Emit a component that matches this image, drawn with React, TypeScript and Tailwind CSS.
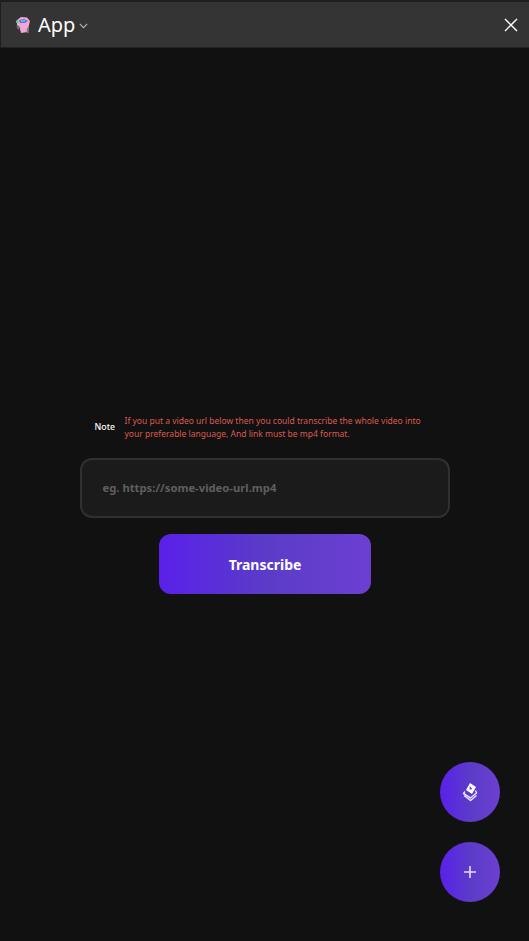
import React from "react";

const grad = "bg-[linear-gradient(90deg,#5a20ea_0%,#5a3cc8_50%,#6c3fd2_100%)]";

export default function App() {
  return (
    <div className="relative flex h-[941px] w-[529px] flex-col overflow-hidden bg-[#111111] font-['Noto_Sans',sans-serif]">
      <header className="flex h-[48px] shrink-0 items-center justify-between border-t-2 border-l border-b border-t-[#1e1e1e] border-l-[#1e1e1e] border-b-[#222222] bg-[#343434] pl-[14px] pr-[11px]">
        <div className="flex items-center">
          <svg width="16" height="18" viewBox="0 0 16 18" className="mr-[7px]">
            <path d="M2 4 L6 1 L12 1.5 L15 5 L14 9 L12.5 16 L6 17 L4.5 11 L2 9 Z" fill="#f3a6d2" />
            <path d="M4 4 L9 3 L13 5 L10 7 L5 7 Z" fill="#6a6ae0" />
            <rect x="6" y="4" width="4" height="2" fill="#38c8d8" />
            <rect x="1" y="4.5" width="2.5" height="2.5" fill="#2fe08a" />
            <path d="M1.5 9 L4 11 L4 14 L2 12 Z" fill="#777777" />
            <path d="M12 12 L14 12 L13.5 17 L11.5 17 Z" fill="#8a7a80" />
          </svg>
          <span className="text-[20px] leading-none text-white">App</span>
          <svg width="9" height="6" viewBox="0 0 9 6" className="ml-[4px] mt-[2px]" fill="none" stroke="#b4b4b4" strokeWidth="1.1">
            <path d="M0.8 0.8 L4.5 4.6 L8.2 0.8" />
          </svg>
        </div>
        <svg width="14" height="14" viewBox="0 0 14 14" fill="none" stroke="#ffffff" strokeWidth="1.4" className="mt-[1px]">
          <path d="M1 1 L13 13 M13 1 L1 13" />
        </svg>
      </header>

      <main className="flex flex-col items-center pt-[367px]">
        <div className="flex w-[370px] items-center pl-[15px]">
          <span className="w-[30px] shrink-0 text-[8.75px] font-medium text-white">Note</span>
          <p className="w-[298px] text-[8.5px] leading-[12.5px] text-[#dc5a50]">
            If you put a video url below then you could transcribe the whole video into your preferable language, And link must be mp4 format.
          </p>
        </div>
        <div className="mt-[18px] flex h-[60px] w-[370px] items-center rounded-[12px] border-2 border-[#303030] bg-[#1b1b1b] pl-[21px]">
          <span className="text-[11.25px] font-bold text-[#5f5f5f]">eg. https://some-video-url.mp4</span>
        </div>
        <button className={`mt-[16px] flex h-[60px] w-[212px] items-center justify-center rounded-[12px] pl-[1px] text-[14px] font-bold text-white ${grad}`}>
          Transcribe
        </button>
      </main>

      <button className={`absolute left-[440px] top-[762px] flex h-[60px] w-[60px] items-center justify-center rounded-full ${grad}`}>
        <svg width="18" height="20" viewBox="0 0 18 20" fill="none">
          <path d="M9 1 L15 5 L11 12 L5 8 Z" fill="#ffffff" />
          <path d="M8.7 4 L8.7 7.8 L11.4 7" fill="#6a3fd2" />
          <path d="M4 9.5 L2.5 11.5 L9.5 16 L15.5 11 L14.5 8.5" stroke="#e8e0ff" strokeWidth="1.5" strokeLinejoin="round" />
          <path d="M3 13.5 L9.5 18.5 L15.5 13.5" stroke="#e8e0ff" strokeWidth="1.5" strokeLinejoin="round" />
        </svg>
      </button>
      <button className={`absolute left-[440px] top-[842px] flex h-[60px] w-[60px] items-center justify-center rounded-full ${grad}`}>
        <svg width="12" height="12" viewBox="0 0 12 12" stroke="#e6dcff" strokeWidth="1.6">
          <path d="M6 0 V12 M0 6 H12" />
        </svg>
      </button>
    </div>
  );
}
